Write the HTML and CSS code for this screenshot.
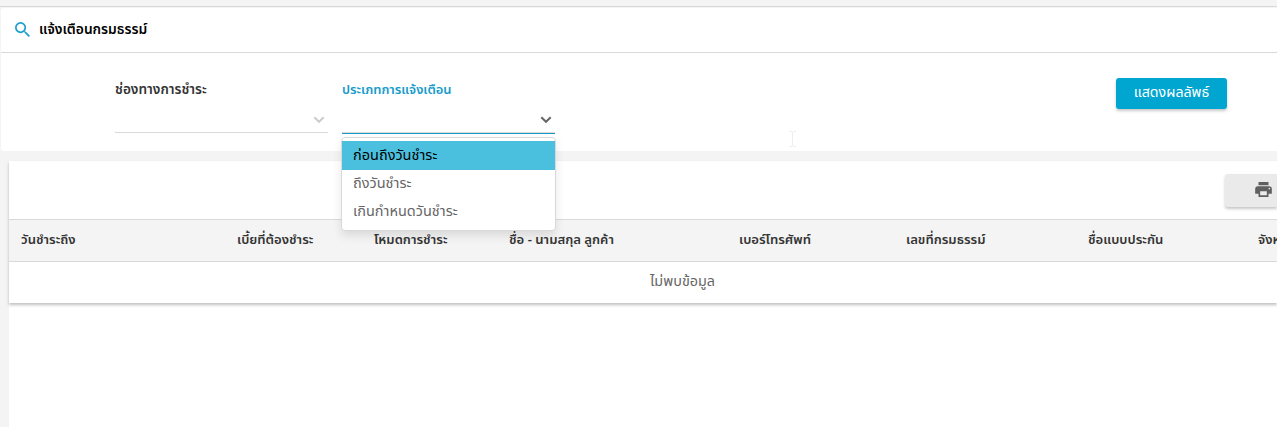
FILE: index.html
```html
<!DOCTYPE html>
<html lang="th">
<head>
<meta charset="utf-8">
<title>แจ้งเตือนกรมธรรม์</title>
<link rel="stylesheet" href="styles.css">
</head>
<body>
<div class="topbar"></div>
<section class="search-card">
  <header class="card-header">
    <svg class="search-icon" viewBox="3 3 17.5 17.5"><path d="M15.5 14h-.79l-.28-.27A6.471 6.471 0 0 0 16 9.5 6.5 6.5 0 1 0 9.5 16c1.61 0 3.09-.59 4.23-1.57l.27.28v.79l5 4.99L20.49 19l-4.99-5zm-6 0C7.01 14 5 11.99 5 9.5S7.01 5 9.5 5 14 7.01 14 9.5 11.99 14 9.5 14z"/></svg>
    <h1 class="title">แจ้งเตือนกรมธรรม์</h1>
  </header>
  <div class="filters">
    <div class="field">
      <label class="label">ช่องทางการชำระ</label>
      <div class="select"><svg class="chevron" viewBox="0 0 12 8"><path d="M1.3 1.3 6 5.8l4.7-4.5"/></svg></div>
    </div>
    <div class="field active">
      <label class="label">ประเภทการแจ้งเตือน</label>
      <div class="select"><svg class="chevron" viewBox="0 0 12 8"><path d="M1.3 1.3 6 5.8l4.7-4.5"/></svg></div>
      <ul class="menu">
        <li class="option selected">ก่อนถึงวันชำระ</li>
        <li class="option">ถึงวันชำระ</li>
        <li class="option">เกินกำหนดวันชำระ</li>
      </ul>
    </div>
    <svg class="text-cursor" viewBox="0 0 7 16"><path d="M0 .5h3M4 .5h3M3.500 1v14M0 15.500h3M4 15.500h3"/></svg>
    <button class="submit">แสดงผลลัพธ์</button>
  </div>
</section>
<main class="content">
  <section class="result-card">
    <div class="toolbar">
      <button class="print"><svg class="print-icon" viewBox="2 3 20 18"><path d="M19 8H5c-1.660 0-3 1.340-3 3v6h4v4h12v-4h4v-6c0-1.660-1.340-3-3-3zm-3 11H8v-5h8v5zm3-7c-.55 0-1-.45-1-1s.45-1 1-1 1 .45 1 1-.45 1-1 1zm-1-9H6v4h12V3z"/></svg></button>
    </div>
    <div class="thead">
      <span>วันชำระถึง</span><span>เบี้ยที่ต้องชำระ</span><span>โหมดการชำระ</span><span>ชื่อ - นามสกุล ลูกค้า</span><span>เบอร์โทรศัพท์</span><span>เลขที่กรมธรรม์</span><span>ชื่อแบบประกัน</span><span>จังหวัด</span>
    </div>
    <div class="empty">ไม่พบข้อมูล</div>
  </section>
</main>
</body>
</html>
```
FILE: styles.css
```css
* { box-sizing: border-box; }
body {
  margin: 0;
  width: 1277px;
  height: 427px;
  overflow: hidden;
  display: flex;
  flex-direction: column;
  background: #f4f4f4;
  color: #333;
  font-family: "Noto Sans Thai", "Noto Sans", sans-serif;
  font-size: 14px;
}
.topbar { height: 7px; border-bottom: 1px solid #d9d9d9; flex: none; }
.search-card {
  margin: 1px 0 0 1px;
  height: 143px;
  flex: none;
  background: #fff;
  border-radius: 3px 0 0 3px;
}
.card-header {
  height: 45px;
  padding: 0 0 2px 14px;
  display: flex;
  align-items: center;
  gap: 9px;
  border-bottom: 1px solid #d9d9d9;
}
.search-icon { width: 15px; height: 15px; fill: #1e9fd0; }
.title { margin: 0; padding-top: 2px; font-size: 13.8px; font-weight: 600; line-height: 24px; color: #000; white-space: nowrap; }
.filters { display: flex; align-items: flex-start; gap: 14px; padding: 25px 50px 0 114px; }
.field { width: 213px; position: relative; }
.label { display: block; height: 24px; line-height: 24px; font-size: 13.6px; font-weight: 600; color: #333; white-space: nowrap; }
.active .label { color: #169bcb; font-size: 12.9px; }
.select {
  height: 31px;
  display: flex;
  justify-content: flex-end;
  padding: 14px 3px 0 0;
  border-bottom: 1px solid #d9d9d9;
}
.active .select { height: 32px; border-bottom: 1px solid #169bcb; box-shadow: inset 0 -1px 0 #d9d9d9; }
.chevron { width: 12px; height: 8px; fill: none; stroke: #ccc; stroke-width: 2; }
.active .chevron { stroke: #666; }
.menu {
  position: absolute;
  z-index: 2;
  top: 59px;
  left: -1px;
  width: 215px;
  height: 94px;
  margin: 0;
  padding: 3px 0 0;
  list-style: none;
  background: #fff;
  border: 1px solid #d9d9d9;
  border-radius: 4px;
  box-shadow: 0 5px 10px rgba(0, 0, 0, .1);
}
.option { height: 28px; line-height: 28px; padding-left: 11px; font-size: 14.5px; color: #666; white-space: nowrap; }
.selected { height: 29px; line-height: 30px; background: #4bc0de; color: #000; }
.text-cursor { width: 7px; height: 16px; margin: 53px 0 0 220px; fill: none; stroke: #ededed; }
.submit {
  width: 111px;
  height: 31px;
  margin-left: auto;
  padding: 0 0 2px;
  border: 0;
  border-radius: 3px;
  background: #00a5d0;
  color: #fff;
  font: inherit;
  font-size: 14.2px;
  white-space: nowrap;
  box-shadow: 0 2px 3px rgba(0, 0, 0, .22);
}
.content { flex: 1; margin: 10px 0 0 9px; background: #fff; }
.result-card { height: 142px; box-shadow: 0 2px 3px rgba(0, 0, 0, .25); }
.toolbar { height: 58px; padding-top: 13px; display: flex; justify-content: flex-end; }
.print {
  width: 52px;
  height: 33px;
  padding: 0 5px 2px 0;
  display: flex;
  align-items: center;
  justify-content: flex-end;
  border: 0;
  border-radius: 3px 0 0 3px;
  background: #eaeaea;
  box-shadow: 0 2px 3px rgba(0, 0, 0, .22);
}
.print-icon { width: 17px; height: 15px; fill: #606060; }
.thead {
  height: 43px;
  padding-left: 12px;
  display: grid;
  grid-template-columns: 216px 137px 135px 230px 167px 182px 170px 80px;
  line-height: 40px;
  overflow: hidden;
  font-size: 13.1px;
  font-weight: 600;
  white-space: nowrap;
  background: #f4f4f4;
  border-top: 1px solid #d9d9d9;
  border-bottom: 1px solid #d9d9d9;
}
.empty { height: 41px; padding-left: 641px; line-height: 40px; font-size: 14.4px; color: #666; }
```
